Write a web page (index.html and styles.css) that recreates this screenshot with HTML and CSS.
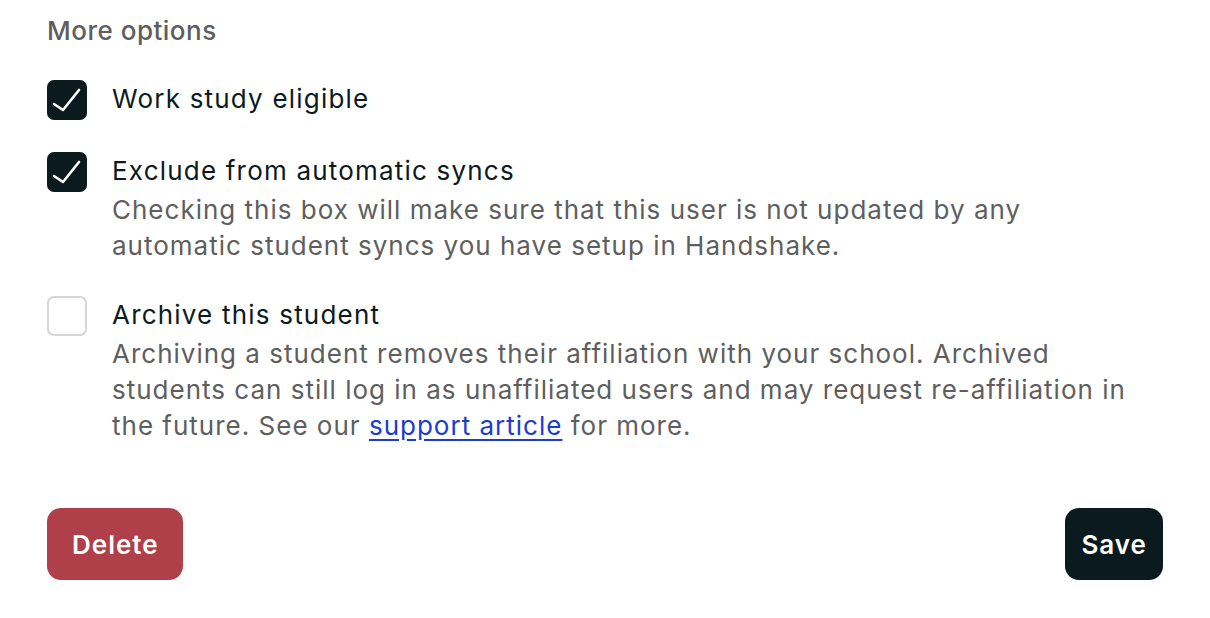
FILE: index.html
```html
<!DOCTYPE html>
<html lang="en">
<head>
<meta charset="utf-8">
<title>More options</title>
<link rel="stylesheet" href="styles.css">
</head>
<body>
<main class="panel">
  <h2 class="section-title">More options</h2>
  <div class="options">
    <div class="option">
      <span class="box checked">
        <svg viewBox="0 0 40 40" width="40" height="40"><path d="M7 24 L16 30 L32 10" fill="none" stroke="#fff" stroke-width="2.6" stroke-linecap="round" stroke-linejoin="round"/></svg>
      </span>
      <div class="text">
        <div class="label">Work study eligible</div>
      </div>
    </div>
    <div class="option">
      <span class="box checked">
        <svg viewBox="0 0 40 40" width="40" height="40"><path d="M7 24 L16 30 L32 10" fill="none" stroke="#fff" stroke-width="2.6" stroke-linecap="round" stroke-linejoin="round"/></svg>
      </span>
      <div class="text">
        <div class="label">Exclude from automatic syncs</div>
        <p class="desc">Checking this box will make sure that this user is not updated by any automatic student syncs you have setup in Handshake.</p>
      </div>
    </div>
    <div class="option">
      <span class="box"></span>
      <div class="text">
        <div class="label">Archive this student</div>
        <p class="desc">Archiving a student removes their affiliation with your school. Archived students can still log in as unaffiliated users and may request re-affiliation in the future. See our <a href="#" class="link">support article</a> for more.</p>
      </div>
    </div>
  </div>
  <div class="actions">
    <button class="btn btn-delete">Delete</button>
    <button class="btn btn-save">Save</button>
  </div>
</main>
</body>
</html>
```
FILE: styles.css
```css
* { box-sizing: border-box; }
html, body { margin: 0; padding: 0; background: #fff; }
body {
  font-family: Inter, "Liberation Sans", sans-serif;
  font-size: 26px;
  color: #0b1a1e;
}
.panel { padding: 13px 47px 0 47px; }
.section-title {
  margin: 0 0 31px 0;
  font-size: 26px;
  line-height: 36px;
  font-weight: 500;
  letter-spacing: 0.5px;
  color: #5e5e5e;
}
.options { display: flex; flex-direction: column; gap: 32px; }
.option { display: flex; gap: 25px; align-items: flex-start; }
.box {
  flex: 0 0 40px;
  width: 40px;
  height: 40px;
  border-radius: 7px;
  border: 2px solid #d6d6d6;
  background: #fff;
  display: block;
  position: relative;
}
.box.checked { background: #0b1a1e; border-color: #0b1a1e; }
.box svg { position: absolute; left: -2px; top: -2px; }
.text { flex: 1; max-width: 1037px; }
.label { line-height: 38px; color: #0b1a1e; letter-spacing: 1.2px; margin-bottom: 2px; }
.desc { margin: 0; line-height: 36px; color: #5e5e5e; letter-spacing: 1px; }
.link { color: #1a3ccf; text-decoration: underline; text-underline-offset: 4px; }
.actions {
  display: flex;
  justify-content: space-between;
  margin-top: 64px;
}
.btn {
  height: 72px;
  border: none;
  border-radius: 14px;
  font-family: inherit;
  font-size: 26px;
  font-weight: 600;
  letter-spacing: 1px;
  color: #fff;
  cursor: pointer;
}
.btn-delete { background: #af404a; padding: 0 24px 0 25px; }
.btn-save { background: #0b1a1e; padding: 0 16px 0 16px; }
```
